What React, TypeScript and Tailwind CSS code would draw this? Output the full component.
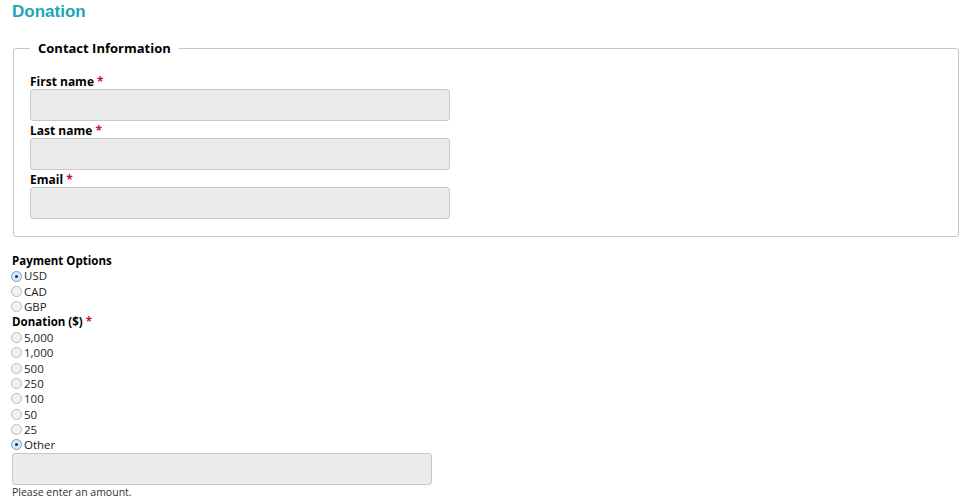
import React from "react";

const Req = () => <span className="text-[#c8102e]"> *</span>;

function Field({ label }: { label: string }) {
  return (
    <div>
      <label className="block h-[17px] pt-[2px] text-[12px] font-bold leading-[15px] text-black">
        {label}
        <Req />
      </label>
      <input
        type="text"
        className="block h-[32px] w-[420px] rounded-[3px] border border-[#c9c9c9] bg-[#ebebeb]"
      />
    </div>
  );
}

function Radio({ label, checked }: { label: string; checked?: boolean }) {
  return (
    <div className="flex h-[15.36px] items-center">
      <span
        className={
          checked
            ? "-ml-[1px] mr-[2px] flex h-[11px] w-[11px] items-center justify-center rounded-full border border-[#6d9ed8] bg-[#dbe9fb]"
            : "-ml-[1px] mr-[2px] h-[11px] w-[11px] rounded-full border border-[#b9b9b9] bg-[#f2f2f2]"
        }
      >
        {checked && <span className="h-[3px] w-[3px] rounded-full bg-[#1b2b45]" />}
      </span>
      <span className="text-[11.5px] leading-[15.36px] text-[#222]">{label}</span>
    </div>
  );
}

export default function App() {
  const currencies = ["USD", "CAD", "GBP"];
  const amounts = ["5,000", "1,000", "500", "250", "100", "50", "25"];

  return (
    <div
      className="min-h-screen bg-white px-[12px] text-black"
      style={{ fontFamily: '"Open Sans", "Liberation Sans", sans-serif' }}
    >
      <h1
        className="pt-[1px] text-[17px] font-bold leading-[22px] text-[#21a4b5]"
        style={{ fontFamily: '"Liberation Sans", Arial, sans-serif' }}
      >
        Donation
      </h1>

      <fieldset className="mt-[15px] ml-[1px] w-[946px] rounded-[3px] border border-[#c6c6c6] pt-[14px] pr-[16px] pb-[17px] pl-[16px]">
        <legend className="px-[8px] text-[13px] font-bold leading-[20px] text-black">
          Contact Information
        </legend>
        <Field label="First name" />
        <Field label="Last name" />
        <Field label="Email" />
      </fieldset>

      <div className="mt-[16px]">
        <div className="text-[11.5px] font-bold leading-[15.36px]">Payment Options</div>
        {currencies.map((c) => (
          <Radio key={c} label={c} checked={c === "USD"} />
        ))}
        <div className="text-[11.5px] font-bold leading-[15.36px]">
          Donation ($)
          <Req />
        </div>
        {amounts.map((a) => (
          <Radio key={a} label={a} />
        ))}
        <Radio label="Other" checked />
        <input
          type="text"
          className="block h-[32px] w-[420px] rounded-[3px] border border-[#c9c9c9] bg-[#ebebeb]"
        />
        <p className="text-[10.5px] leading-[14px] text-[#333]">Please enter an amount.</p>
      </div>
    </div>
  );
}
